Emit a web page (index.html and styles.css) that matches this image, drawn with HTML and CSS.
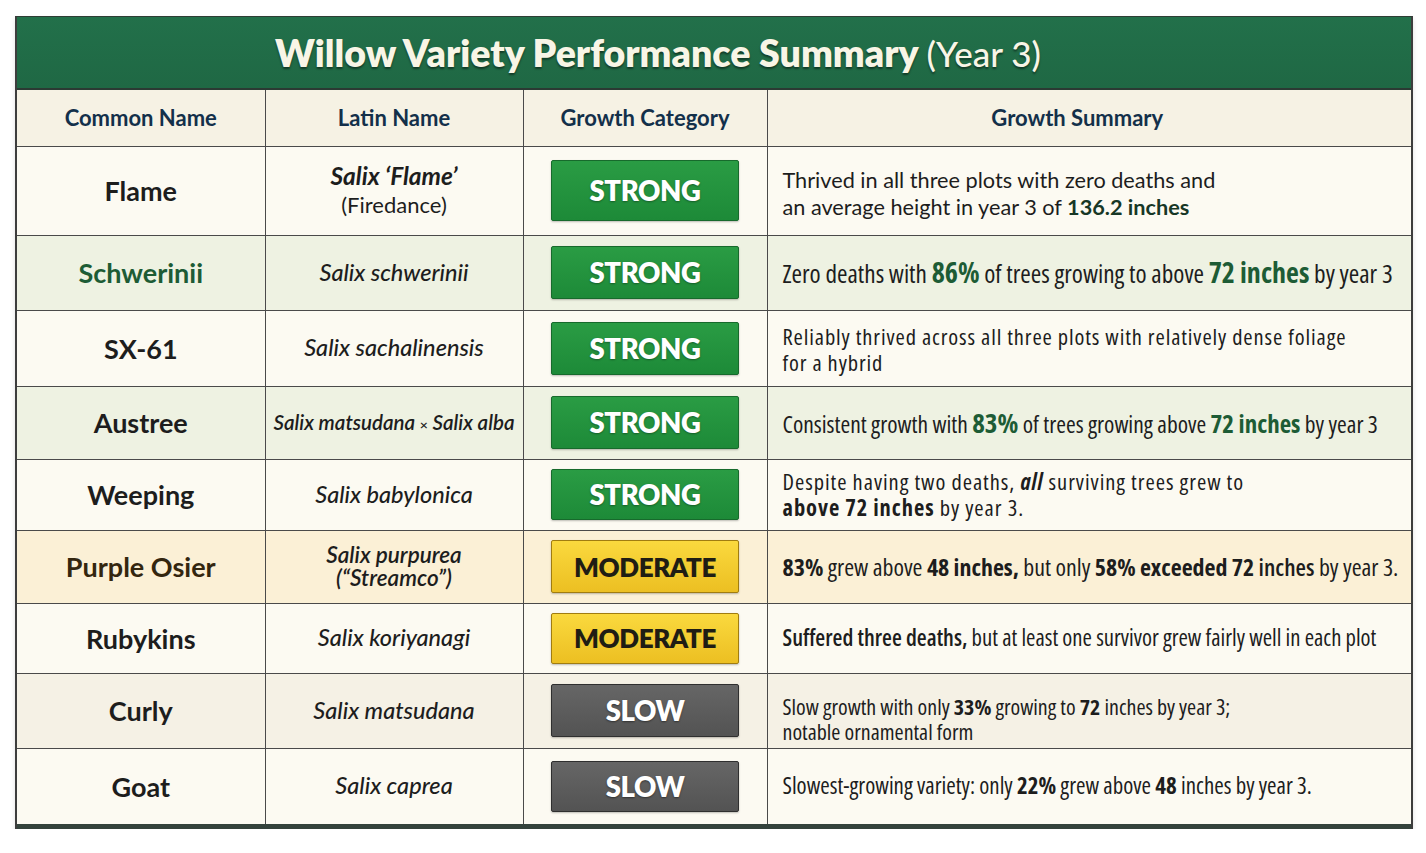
FILE: index.html
```html
<!DOCTYPE html>
<html lang="en">
<head>
<meta charset="utf-8">
<title>Willow Variety Performance Summary</title>
<link rel="stylesheet" href="styles.css">
</head>
<body>
<div class="sheet">
  <div class="title-bar">
    <h1 class="title"><span class="title-main">Willow Variety Performance Summary</span> <span class="title-year">(Year 3)</span></h1>
  </div>
  <table class="grid">
    <colgroup>
      <col class="c-common">
      <col class="c-latin">
      <col class="c-cat">
      <col class="c-sum">
    </colgroup>
    <thead>
      <tr class="head-row">
        <th>Common Name</th>
        <th>Latin Name</th>
        <th>Growth Category</th>
        <th>Growth Summary</th>
      </tr>
    </thead>
    <tbody>
      <tr class="row r1 bg-cream">
        <td class="common">Flame</td>
        <td class="latin latin-two-wide"><span class="latin-strong">Salix ‘Flame’</span><br><span class="latin-paren">(Firedance)</span></td>
        <td class="cat"><span class="badge strong tall">STRONG</span></td>
        <td class="sum s1">Thrived in all three plots with zero deaths and<br>an average height in year 3 of <b class="hl-dark">136.2 inches</b></td>
      </tr>
      <tr class="row r2 bg-green">
        <td class="common name-green">Schwerinii</td>
        <td class="latin">Salix schwerinii</td>
        <td class="cat"><span class="badge strong">STRONG</span></td>
        <td class="sum s2">Zero deaths with <b class="hl-green big">86%</b> of trees growing to above <b class="hl-green big">72 inches</b> by year 3</td>
      </tr>
      <tr class="row r3 bg-cream">
        <td class="common">SX-61</td>
        <td class="latin">Salix sachalinensis</td>
        <td class="cat"><span class="badge strong">STRONG</span></td>
        <td class="sum s3">Reliably thrived across all three plots with relatively dense foliage<br>for a hybrid</td>
      </tr>
      <tr class="row r4 bg-green">
        <td class="common">Austree</td>
        <td class="latin latin-small">Salix matsudana <span class="times">×</span> Salix alba</td>
        <td class="cat"><span class="badge strong">STRONG</span></td>
        <td class="sum s4">Consistent growth with <b class="hl-green big">83%</b> of trees growing above <b class="hl-green mid">72 inches</b> by year 3</td>
      </tr>
      <tr class="row r5 bg-cream">
        <td class="common">Weeping</td>
        <td class="latin">Salix babylonica</td>
        <td class="cat"><span class="badge strong short">STRONG</span></td>
        <td class="sum s5">Despite having two deaths, <b><i>all</i></b> surviving trees grew to<br><b>above 72 inches</b> by year 3.</td>
      </tr>
      <tr class="row r6 bg-yellow">
        <td class="common name-brown">Purple Osier</td>
        <td class="latin latin-two">Salix purpurea<br>(“Streamco”)</td>
        <td class="cat"><span class="badge moderate">MODERATE</span></td>
        <td class="sum s6"><b>83%</b> grew above <b>48 inches,</b> but only <b>58% exceeded 72</b> <span class="semi">inches</span> by year 3.</td>
      </tr>
      <tr class="row r7 bg-cream">
        <td class="common">Rubykins</td>
        <td class="latin">Salix koriyanagi</td>
        <td class="cat"><span class="badge moderate short">MODERATE</span></td>
        <td class="sum s7"><span class="semi">Suffered three deaths,</span> but at least one survivor grew fairly well in each plot</td>
      </tr>
      <tr class="row r8 bg-beige">
        <td class="common">Curly</td>
        <td class="latin">Salix matsudana</td>
        <td class="cat"><span class="badge slow">SLOW</span></td>
        <td class="sum s8">Slow growth with only <b>33%</b> growing to <b>72</b> inches by year 3;<br>notable ornamental form</td>
      </tr>
      <tr class="row r9 bg-cream">
        <td class="common">Goat</td>
        <td class="latin">Salix caprea</td>
        <td class="cat"><span class="badge slow short">SLOW</span></td>
        <td class="sum s9">Slowest-growing variety: only <b>22%</b> grew above <b>48</b> inches by year 3.</td>
      </tr>
    </tbody>
  </table>
</div>
</body>
</html>
```

FILE: styles.css
```css
* { box-sizing: border-box; }

html, body {
  margin: 0;
  padding: 0;
  background: #ffffff;
}

body {
  font-family: "Lato", "Open Sans", sans-serif;
  color: #1c1c1c;
}

.sheet {
  width: 1398px;
  margin: 16px 0 0 15px;
  border-left: 2px solid #3d3d3d;
  border-right: 2px solid #3d3d3d;
  border-top: 1px solid #2e3d35;
  box-shadow: 0 3px 5px rgba(0, 0, 0, 0.12);
}

.title-bar {
  height: 73px;
  background: linear-gradient(180deg, #22704a 0%, #1f6844 100%);
  display: flex;
  align-items: center;
  justify-content: center;
  padding-right: 112px;
  border-bottom: 2px solid #2b3a33;
}

.title {
  margin: 0;
  color: #f8f5e6;
  font-family: "Lato", sans-serif;
  text-shadow: 0 2px 2px rgba(0, 0, 0, 0.45);
  white-space: nowrap;
  line-height: 1;
}

.title-main {
  font-size: 37.5px;
  font-weight: 800;
}

.title-year {
  font-size: 35px;
  font-weight: 500;
}

.grid {
  width: 100%;
  border-collapse: collapse;
  table-layout: fixed;
}

.c-common { width: 248px; }
.c-latin { width: 258px; }
.c-cat { width: 244px; }
.c-sum { width: auto; }

.grid th,
.grid td {
  border: 1.5px solid #4a4a4a;
  padding: 0;
  vertical-align: middle;
}

.grid tr > :first-child { border-left: none; }
.grid tr > :last-child { border-right: none; }

.head-row {
  height: 56px;
  background: #f6f2e4;
}

.head-row th {
  color: #13304a;
  font-family: "Lato", sans-serif;
  font-size: 22px;
  font-weight: 700;
  text-align: center;
  border-top: none;
}

.head-row th:last-child {
  padding-right: 24px;
}

.r1 { height: 89px; }
.r2 { height: 75px; }
.r3 { height: 76px; }
.r4 { height: 73px; }
.r5 { height: 71px; }
.r6 { height: 73px; }
.r7 { height: 70px; }
.r8 { height: 75px; }
.r9 { height: 78px; }

.grid tbody tr:last-child td {
  border-bottom: 5px solid #34423c;
}

.bg-cream { background: #fcfaf2; }
.bg-green { background: #eef2e2; }
.bg-yellow { background: #fbf0d6; }
.bg-beige { background: #f5f1e5; }

.common {
  text-align: center;
  font-family: "Lato", sans-serif;
  font-size: 27px;
  font-weight: 700;
  color: #1d1d1d;
}

.name-green { color: #1d5c35; }
.name-brown { color: #33260f; }

.latin {
  text-align: center;
  font-family: "Lato", sans-serif;
  font-size: 23.5px;
  font-style: italic;
  font-weight: 500;
  color: #1d1d1d;
  line-height: 1.1;
}

.latin-two-wide {
  line-height: 1.18;
}

.latin-strong {
  font-weight: 700;
  font-size: 24.5px;
}

.latin-paren {
  font-style: normal;
  font-weight: 400;
  font-size: 22px;
}

.latin-small {
  font-size: 20.5px;
  font-weight: 600;
}

.latin-two {
  line-height: 1.02;
  font-size: 22.5px;
  font-weight: 600;
}

.times {
  font-style: normal;
  font-size: 14px;
}

.cat {
  text-align: center;
}

.badge {
  display: inline-flex;
  align-items: center;
  justify-content: center;
  width: 188px;
  height: 53px;
  font-family: "Lato", sans-serif;
  font-size: 27.5px;
  font-weight: 800;
  letter-spacing: -0.4px;
  border-radius: 2px;
  vertical-align: middle;
  box-shadow: 0 1px 2px rgba(0, 0, 0, 0.25);
}

.badge.tall { height: 61px; }
.badge.short { height: 51px; }

.badge.strong {
  background: linear-gradient(180deg, #2a9c44 0%, #1d8a38 100%);
  border: 1px solid #176a2c;
  color: #ffffff;
  text-shadow: 0 1px 2px rgba(0, 0, 0, 0.35);
}

.badge.moderate {
  background: linear-gradient(180deg, #fad93e 0%, #ecbf22 100%);
  border: 1px solid #a07c10;
  color: #1f1d14;
  font-size: 26px;
}

.badge.slow {
  background: linear-gradient(180deg, #666666 0%, #535353 100%);
  border: 1px solid #2f2f2f;
  color: #ffffff;
  text-shadow: 0 1px 2px rgba(0, 0, 0, 0.45);
}

.grid td.sum {
  padding-left: 15px;
  text-align: left;
  font-family: "Open Sans", sans-serif;
  font-stretch: 75%;
  font-size: 22px;
  line-height: 1.15;
  color: #1d1d1d;
}

.grid td.s1 {
  font-family: "Lato", sans-serif;
  font-stretch: 100%;
  font-size: 21.7px;
  line-height: 1.26;
  padding-top: 7px;
}
.grid td.s2 { font-size: 25.3px; line-height: 1.1; }
.grid td.s3 { font-size: 22.5px; letter-spacing: 0.88px; line-height: 26px; padding-top: 4px; }
.grid td.s4 { font-size: 23.5px; }
.grid td.s5 { font-size: 22.5px; letter-spacing: 0.95px; line-height: 26px; }
.grid td.s6 { font-size: 23.9px; }
.grid td.s7 { font-size: 22.7px; }
.grid td.s8 { font-size: 22px; line-height: 25px; padding-top: 16px; }
.grid td.s9 { font-size: 22.9px; }

.sum b { font-weight: 700; }

.hl-green { color: #1d5c35; }
.hl-dark { color: #173726; }

.s2 .big { font-size: 28px; }
.s4 .big { font-size: 27px; }
.s4 .mid { font-size: 25px; }

.semi { font-weight: 600; }
```
